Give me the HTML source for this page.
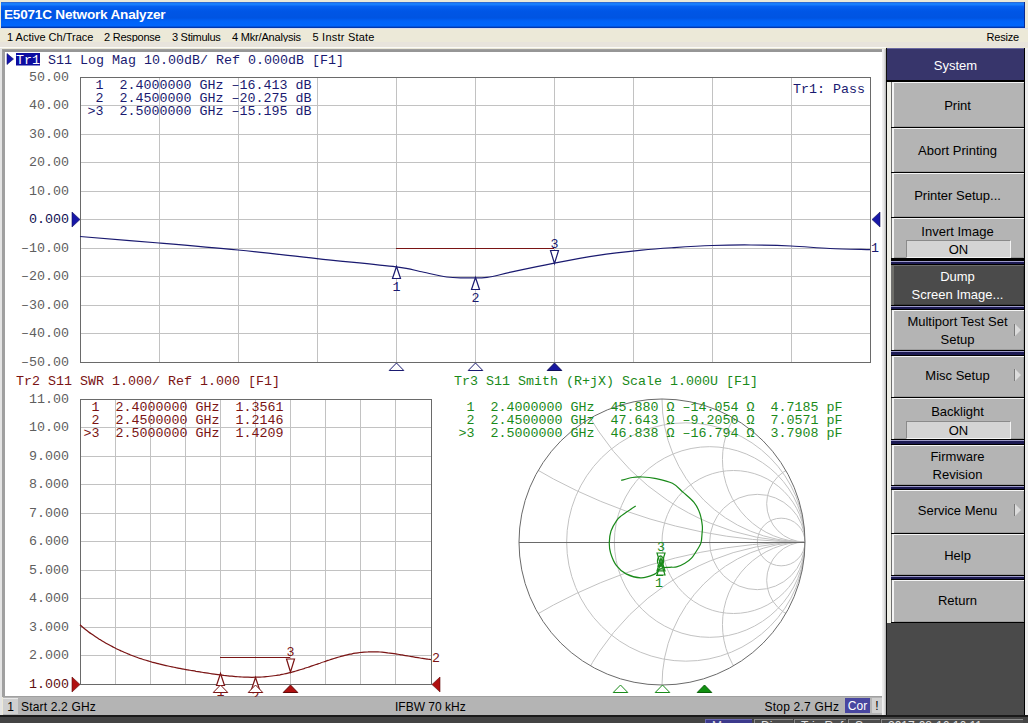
<!DOCTYPE html>
<html><head><meta charset="utf-8"><style>
html,body{margin:0;padding:0;}
body{width:1028px;height:723px;overflow:hidden;position:relative;background:#ece9d8;font-family:"Liberation Sans", sans-serif;}
.a{position:absolute;}
.title{left:1px;top:2px;width:1024px;height:26px;box-sizing:border-box;border-right:1px solid #0a2a90;background:linear-gradient(#2c6cd6 0px,#2c6cd6 1px,#1a7efc 1px,#1a7efc 3px,#0862f2 4px,#0056e6 9px,#0054e2 16px,#0062f8 19px,#0066fc 24px,#0040c0 25px,#0030a0 26px);}
.title span{position:absolute;left:3px;top:5px;color:#fff;font-weight:bold;font-size:13.6px;letter-spacing:-0.22px;line-height:16px;}
.menu{left:0;top:28px;width:1028px;height:19px;font-size:11px;line-height:18px;color:#000;}
.menu span{position:absolute;top:0;white-space:pre;}
.panel{left:5px;top:52px;width:877px;height:644px;background:#fff;}
.sk{font-size:13px;text-align:center;white-space:pre;}

.onbox{background:#d4d4d4;border-top:1px solid #8a8a8a;border-left:1px solid #8a8a8a;border-bottom:1px solid #f4f4f4;border-right:1px solid #f4f4f4;text-align:center;line-height:18px;color:#000;box-sizing:border-box;font-size:13px;}
.arr{width:0;height:0;border-left:6px solid #dcdcdc;border-top:6px solid transparent;border-bottom:6px solid transparent;}
.status{left:3px;top:697px;width:879px;height:18px;background:#b4b4b4;font-size:12px;line-height:18px;color:#000;}
.status span{position:absolute;top:0;white-space:pre;}
.tb{top:719px;height:4px;overflow:hidden;background:#4c4c4c;border-top:1px solid #8c8c8c;border-left:1px solid #8c8c8c;box-sizing:border-box;color:#e0e0e0;font-size:12px;line-height:13px;text-indent:6px;white-space:pre;}
</style></head><body>
<div class="a title"><span>E5071C Network Analyzer</span></div>
<div class="a menu"><span style="left:7px">1 Active Ch/Trace</span><span style="left:104px;letter-spacing:-0.22px">2 Response</span><span style="left:172px;letter-spacing:-0.29px">3 Stimulus</span><span style="left:232px;letter-spacing:-0.19px">4 Mkr/Analysis</span><span style="left:312.5px;letter-spacing:0.22px">5 Instr State</span><span style="left:986.5px;letter-spacing:-0.2px">Resize</span></div>
<div class="a" style="left:0;top:28px;width:1028px;height:1px;background:#d8dcec"></div>
<div class="a" style="left:0;top:42px;width:1028px;height:5px;background:#e8e4dc"></div>
<div class="a" style="left:0;top:47px;width:886px;height:1px;background:#fbfbf8"></div>
<div class="a" style="left:2px;top:49px;width:884px;height:648px;background:#a0a0a0"></div>
<div class="a" style="left:3px;top:50px;width:879px;height:2px;background:#969696"></div>
<div class="a" style="left:882px;top:49px;width:4px;height:667px;background:linear-gradient(90deg,#f2f2f2,#e6e6e6 50%,#b0b0b0)"></div>
<div class="a" style="left:886px;top:48px;width:1px;height:669px;background:#101010"></div>
<div class="a" style="left:887px;top:81px;width:4px;height:542px;background:#f0f0e8"></div>
<div class="a panel"></div>
<svg class="a" style="left:0;top:0" width="1028" height="723" font-family='"Liberation Mono", monospace'><line x1="159.5" y1="77" x2="159.5" y2="362" stroke="#c2c2c2" stroke-width="1"/><line x1="238.5" y1="77" x2="238.5" y2="362" stroke="#c2c2c2" stroke-width="1"/><line x1="317.5" y1="77" x2="317.5" y2="362" stroke="#c2c2c2" stroke-width="1"/><line x1="396.5" y1="77" x2="396.5" y2="362" stroke="#c2c2c2" stroke-width="1"/><line x1="475.5" y1="77" x2="475.5" y2="362" stroke="#c2c2c2" stroke-width="1"/><line x1="554.5" y1="77" x2="554.5" y2="362" stroke="#c2c2c2" stroke-width="1"/><line x1="633.5" y1="77" x2="633.5" y2="362" stroke="#c2c2c2" stroke-width="1"/><line x1="712.5" y1="77" x2="712.5" y2="362" stroke="#c2c2c2" stroke-width="1"/><line x1="791.5" y1="77" x2="791.5" y2="362" stroke="#c2c2c2" stroke-width="1"/><line x1="80" y1="105.5" x2="870" y2="105.5" stroke="#c2c2c2" stroke-width="1"/><line x1="80" y1="134.5" x2="870" y2="134.5" stroke="#c2c2c2" stroke-width="1"/><line x1="80" y1="162.5" x2="870" y2="162.5" stroke="#c2c2c2" stroke-width="1"/><line x1="80" y1="191.5" x2="870" y2="191.5" stroke="#c2c2c2" stroke-width="1"/><line x1="80" y1="219.5" x2="870" y2="219.5" stroke="#c2c2c2" stroke-width="1"/><line x1="80" y1="248.5" x2="870" y2="248.5" stroke="#c2c2c2" stroke-width="1"/><line x1="80" y1="276.5" x2="870" y2="276.5" stroke="#c2c2c2" stroke-width="1"/><line x1="80" y1="305.5" x2="870" y2="305.5" stroke="#c2c2c2" stroke-width="1"/><line x1="80" y1="333.5" x2="870" y2="333.5" stroke="#c2c2c2" stroke-width="1"/><rect x="80.5" y="77.5" width="790" height="285" fill="none" stroke="#6a6a6a"/><text x="69" y="81" fill="#5e5e5e" text-anchor="end" font-size="13.33" xml:space="preserve">50.00</text><text x="69" y="109" fill="#5e5e5e" text-anchor="end" font-size="13.33" xml:space="preserve">40.00</text><text x="69" y="138" fill="#5e5e5e" text-anchor="end" font-size="13.33" xml:space="preserve">30.00</text><text x="69" y="166" fill="#5e5e5e" text-anchor="end" font-size="13.33" xml:space="preserve">20.00</text><text x="69" y="195" fill="#5e5e5e" text-anchor="end" font-size="13.33" xml:space="preserve">10.00</text><text x="69" y="223" fill="#101050" text-anchor="end" font-size="13.33" xml:space="preserve">0.000</text><text x="69" y="252" fill="#5e5e5e" text-anchor="end" font-size="13.33" xml:space="preserve">–10.00</text><text x="69" y="280" fill="#5e5e5e" text-anchor="end" font-size="13.33" xml:space="preserve">–20.00</text><text x="69" y="309" fill="#5e5e5e" text-anchor="end" font-size="13.33" xml:space="preserve">–30.00</text><text x="69" y="337" fill="#5e5e5e" text-anchor="end" font-size="13.33" xml:space="preserve">–40.00</text><text x="69" y="366" fill="#5e5e5e" text-anchor="end" font-size="13.33" xml:space="preserve">–50.00</text><line x1="396" y1="248.5" x2="554" y2="248.5" stroke="#7a1414" stroke-width="1"/><path d="M80.0,236.5 C93.2,237.6 132.7,240.8 159.0,243.0 C185.3,245.2 211.7,247.4 238.0,250.0 C264.3,252.6 290.7,255.8 317.0,258.6 C343.3,261.4 378.8,264.7 396.0,266.8 C413.2,268.9 411.6,269.8 420.0,271.5 C428.4,273.2 439.0,275.9 446.7,277.0 C454.4,278.1 459.3,277.7 466.0,277.8 C472.7,277.9 479.5,278.3 487.0,277.4 C494.5,276.5 499.6,274.6 510.8,272.2 C522.0,269.8 539.8,266.0 554.3,263.2 C568.8,260.4 583.4,257.6 598.0,255.4 C612.6,253.2 629.1,251.5 641.8,250.2 C654.5,248.9 662.3,248.4 674.0,247.6 C685.7,246.8 699.2,245.9 712.0,245.5 C724.8,245.1 737.8,244.9 751.0,245.0 C764.2,245.1 777.8,245.4 791.0,246.0 C804.2,246.6 816.8,247.9 830.0,248.5 C843.2,249.1 863.3,249.4 870.0,249.6" fill="none" stroke="#1a1a70" stroke-width="1.2"/><polygon points="72,212 80,219.5 72,227" fill="#1818a8" stroke="#10105a" stroke-width="0.6"/><polygon points="880,212 872,219.5 880,227" fill="#1818a8" stroke="#10105a" stroke-width="0.6"/><text x="871" y="252" fill="#1a1a70" text-anchor="start" font-size="13.33" xml:space="preserve">1</text><polygon points="396.5,266.5 392.5,278.5 400.5,278.5" fill="white" stroke="#1a1a70" stroke-width="1.2"/><text x="392.5" y="290.5" fill="#1a1a70" text-anchor="start" font-size="13.33" xml:space="preserve">1</text><polygon points="475.5,277.5 471.5,289.5 479.5,289.5" fill="white" stroke="#1a1a70" stroke-width="1.2"/><text x="471.5" y="301.5" fill="#1a1a70" text-anchor="start" font-size="13.33" xml:space="preserve">2</text><polygon points="554.5,263.5 550.5,250.5 558.5,250.5" fill="white" stroke="#1a1a70" stroke-width="1.2"/><text x="550.5" y="247.5" fill="#1a1a70" text-anchor="start" font-size="13.33" xml:space="preserve">3</text><polygon points="389.2,370.5 396.5,363 403.8,370.5" fill="white" stroke="#1a1a70" stroke-width="1"/><polygon points="468.2,370.5 475.5,363 482.8,370.5" fill="white" stroke="#1a1a70" stroke-width="1"/><polygon points="547.2,370.5 554.5,363 561.8,370.5" fill="#1818a0" stroke="#10105a" stroke-width="1"/><rect x="16" y="53" width="24" height="12.5" fill="#0c0ca0"/><polygon points="7,53.5 13.5,59 7,64.5" fill="#1414b0" stroke="#10106a" stroke-width="0.6"/><text x="16" y="63.5" fill="#ffffff" text-anchor="start" font-size="13.33" xml:space="preserve">Tr1</text><text x="48" y="63.5" fill="#1a1a70" text-anchor="start" font-size="13.33" xml:space="preserve">S11 Log Mag 10.00dB/ Ref 0.000dB [F1]</text><text x="87.5" y="89" fill="#1a1a70" text-anchor="start" font-size="13.33" xml:space="preserve"> 1  2.4000000 GHz –16.413 dB</text><text x="87.5" y="102" fill="#1a1a70" text-anchor="start" font-size="13.33" xml:space="preserve"> 2  2.4500000 GHz –20.275 dB</text><text x="87.5" y="115" fill="#1a1a70" text-anchor="start" font-size="13.33" xml:space="preserve">&gt;3  2.5000000 GHz –15.195 dB</text><text x="865" y="93" fill="#1a1a70" text-anchor="end" font-size="13.33" xml:space="preserve">Tr1: Pass</text><line x1="115.5" y1="399" x2="115.5" y2="684" stroke="#c2c2c2" stroke-width="1"/><line x1="150.5" y1="399" x2="150.5" y2="684" stroke="#c2c2c2" stroke-width="1"/><line x1="185.5" y1="399" x2="185.5" y2="684" stroke="#c2c2c2" stroke-width="1"/><line x1="220.5" y1="399" x2="220.5" y2="684" stroke="#c2c2c2" stroke-width="1"/><line x1="255.5" y1="399" x2="255.5" y2="684" stroke="#c2c2c2" stroke-width="1"/><line x1="290.5" y1="399" x2="290.5" y2="684" stroke="#c2c2c2" stroke-width="1"/><line x1="325.5" y1="399" x2="325.5" y2="684" stroke="#c2c2c2" stroke-width="1"/><line x1="360.5" y1="399" x2="360.5" y2="684" stroke="#c2c2c2" stroke-width="1"/><line x1="395.5" y1="399" x2="395.5" y2="684" stroke="#c2c2c2" stroke-width="1"/><line x1="80" y1="427.5" x2="431" y2="427.5" stroke="#c2c2c2" stroke-width="1"/><line x1="80" y1="456.5" x2="431" y2="456.5" stroke="#c2c2c2" stroke-width="1"/><line x1="80" y1="484.5" x2="431" y2="484.5" stroke="#c2c2c2" stroke-width="1"/><line x1="80" y1="513.5" x2="431" y2="513.5" stroke="#c2c2c2" stroke-width="1"/><line x1="80" y1="541.5" x2="431" y2="541.5" stroke="#c2c2c2" stroke-width="1"/><line x1="80" y1="570.5" x2="431" y2="570.5" stroke="#c2c2c2" stroke-width="1"/><line x1="80" y1="598.5" x2="431" y2="598.5" stroke="#c2c2c2" stroke-width="1"/><line x1="80" y1="627.5" x2="431" y2="627.5" stroke="#c2c2c2" stroke-width="1"/><line x1="80" y1="655.5" x2="431" y2="655.5" stroke="#c2c2c2" stroke-width="1"/><rect x="80.5" y="399.5" width="351" height="285" fill="none" stroke="#6a6a6a"/><text x="69" y="403" fill="#5e5e5e" text-anchor="end" font-size="13.33" xml:space="preserve">11.00</text><text x="69" y="431" fill="#5e5e5e" text-anchor="end" font-size="13.33" xml:space="preserve">10.00</text><text x="69" y="460" fill="#5e5e5e" text-anchor="end" font-size="13.33" xml:space="preserve">9.000</text><text x="69" y="488" fill="#5e5e5e" text-anchor="end" font-size="13.33" xml:space="preserve">8.000</text><text x="69" y="517" fill="#5e5e5e" text-anchor="end" font-size="13.33" xml:space="preserve">7.000</text><text x="69" y="545" fill="#5e5e5e" text-anchor="end" font-size="13.33" xml:space="preserve">6.000</text><text x="69" y="574" fill="#5e5e5e" text-anchor="end" font-size="13.33" xml:space="preserve">5.000</text><text x="69" y="602" fill="#5e5e5e" text-anchor="end" font-size="13.33" xml:space="preserve">4.000</text><text x="69" y="631" fill="#5e5e5e" text-anchor="end" font-size="13.33" xml:space="preserve">3.000</text><text x="69" y="659" fill="#5e5e5e" text-anchor="end" font-size="13.33" xml:space="preserve">2.000</text><text x="69" y="688" fill="#601010" text-anchor="end" font-size="13.33" xml:space="preserve">1.000</text><text x="16" y="385" fill="#7a1414" text-anchor="start" font-size="13.33" xml:space="preserve">Tr2 S11 SWR 1.000/ Ref 1.000 [F1]</text><text x="83.5" y="411" fill="#7a1414" text-anchor="start" font-size="13.33" xml:space="preserve"> 1  2.4000000 GHz  1.3561</text><text x="83.5" y="424" fill="#7a1414" text-anchor="start" font-size="13.33" xml:space="preserve"> 2  2.4500000 GHz  1.2146</text><text x="83.5" y="437" fill="#7a1414" text-anchor="start" font-size="13.33" xml:space="preserve">&gt;3  2.5000000 GHz  1.4209</text><line x1="220" y1="657.5" x2="290" y2="657.5" stroke="#7a1414" stroke-width="1"/><path d="M80.0,624.8 C80.7,625.4 82.7,627.1 84.0,628.3 C85.3,629.4 86.7,630.4 88.0,631.4 C89.3,632.4 90.7,633.4 92.0,634.3 C93.3,635.3 94.7,636.2 96.0,637.1 C97.3,638.0 98.7,638.8 100.0,639.6 C101.3,640.5 102.7,641.3 104.0,642.0 C105.3,642.8 106.7,643.6 108.0,644.3 C109.3,645.0 110.7,645.8 112.0,646.4 C113.3,647.1 114.7,647.8 116.0,648.5 C117.3,649.1 118.7,649.8 120.0,650.4 C121.3,651.0 122.7,651.6 124.0,652.2 C125.3,652.8 126.7,653.3 128.0,653.9 C129.3,654.4 130.7,655.0 132.0,655.5 C133.3,656.0 134.7,656.5 136.0,657.0 C137.3,657.5 138.7,657.9 140.0,658.4 C141.3,658.8 142.7,659.3 144.0,659.7 C145.3,660.1 146.7,660.5 148.0,660.9 C149.3,661.3 150.7,661.7 152.0,662.1 C153.3,662.4 154.7,662.8 156.0,663.1 C157.3,663.5 158.7,663.8 160.0,664.2 C161.3,664.5 162.7,664.8 164.0,665.1 C165.3,665.4 166.7,665.7 168.0,666.0 C169.3,666.3 170.7,666.6 172.0,666.8 C173.3,667.1 174.7,667.4 176.0,667.7 C177.3,667.9 178.7,668.2 180.0,668.4 C181.3,668.7 182.7,668.9 184.0,669.2 C185.3,669.4 186.7,669.7 188.0,669.9 C189.3,670.1 190.7,670.4 192.0,670.6 C193.3,670.8 194.7,671.0 196.0,671.3 C197.3,671.5 198.7,671.7 200.0,671.9 C201.3,672.1 202.7,672.4 204.0,672.6 C205.3,672.8 206.7,673.0 208.0,673.2 C209.3,673.4 210.7,673.6 212.0,673.8 C213.3,674.0 214.7,674.2 216.0,674.3 C217.3,674.5 218.7,674.7 220.0,674.9 C221.3,675.1 222.7,675.2 224.0,675.4 C225.3,675.5 226.7,675.7 228.0,675.8 C229.3,676.0 230.7,676.1 232.0,676.2 C233.3,676.4 234.7,676.5 236.0,676.6 C237.3,676.7 238.7,676.8 240.0,676.9 C241.3,677.0 242.7,677.0 244.0,677.1 C245.3,677.2 246.7,677.2 248.0,677.2 C249.3,677.3 250.7,677.3 252.0,677.3 C253.3,677.3 254.7,677.3 256.0,677.2 C257.3,677.2 258.7,677.2 260.0,677.1 C261.3,677.0 262.7,677.0 264.0,676.9 C265.3,676.8 266.7,676.6 268.0,676.5 C269.3,676.4 270.7,676.2 272.0,676.0 C273.3,675.9 274.7,675.7 276.0,675.5 C277.3,675.3 278.7,675.0 280.0,674.8 C281.3,674.5 282.7,674.3 284.0,674.0 C285.3,673.7 286.7,673.4 288.0,673.1 C289.3,672.8 290.7,672.4 292.0,672.1 C293.3,671.7 294.7,671.4 296.0,671.0 C297.3,670.6 298.7,670.2 300.0,669.8 C301.3,669.4 302.7,669.0 304.0,668.6 C305.3,668.1 306.7,667.7 308.0,667.3 C309.3,666.8 310.7,666.4 312.0,665.9 C313.3,665.5 314.7,665.0 316.0,664.5 C317.3,664.1 318.7,663.6 320.0,663.2 C321.3,662.7 322.7,662.2 324.0,661.8 C325.3,661.3 326.7,660.9 328.0,660.4 C329.3,660.0 330.7,659.5 332.0,659.1 C333.3,658.7 334.7,658.3 336.0,657.9 C337.3,657.5 338.7,657.1 340.0,656.7 C341.3,656.3 342.7,656.0 344.0,655.6 C345.3,655.3 346.7,654.9 348.0,654.6 C349.3,654.3 350.7,654.1 352.0,653.8 C353.3,653.5 354.7,653.3 356.0,653.1 C357.3,652.9 358.7,652.7 360.0,652.5 C361.3,652.4 362.7,652.2 364.0,652.1 C365.3,652.0 366.7,651.9 368.0,651.9 C369.3,651.8 370.7,651.8 372.0,651.8 C373.3,651.8 374.7,651.8 376.0,651.8 C377.3,651.9 378.7,651.9 380.0,652.0 C381.3,652.1 382.7,652.2 384.0,652.3 C385.3,652.5 386.7,652.6 388.0,652.8 C389.3,652.9 390.7,653.1 392.0,653.3 C393.3,653.5 394.7,653.7 396.0,653.9 C397.3,654.1 398.7,654.4 400.0,654.6 C401.3,654.8 402.7,655.1 404.0,655.3 C405.3,655.6 406.7,655.8 408.0,656.0 C409.3,656.3 410.7,656.5 412.0,656.7 C413.3,657.0 414.7,657.2 416.0,657.4 C417.3,657.6 418.7,657.8 420.0,658.0 C421.3,658.3 422.7,658.4 424.0,658.6 C425.3,658.8 426.8,659.0 428.0,659.2 C429.2,659.3 430.5,659.5 431.0,659.6" fill="none" stroke="#7a1414" stroke-width="1.2"/><polygon points="72,677 80,684.5 72,692" fill="#b01010" stroke="#600808" stroke-width="0.6"/><polygon points="440,677 432,684.5 440,692" fill="#b01010" stroke="#600808" stroke-width="0.6"/><text x="432" y="662" fill="#7a1414" text-anchor="start" font-size="13.33" xml:space="preserve">2</text><polygon points="220.5,673.5 216.5,685.5 224.5,685.5" fill="white" stroke="#7a1414" stroke-width="1.2"/><text x="216.5" y="695.5" fill="#7a1414" text-anchor="start" font-size="13.33" xml:space="preserve">1</text><polygon points="255.5,677.5 251.5,689.5 259.5,689.5" fill="white" stroke="#7a1414" stroke-width="1.2"/><text x="251.5" y="699.5" fill="#7a1414" text-anchor="start" font-size="13.33" xml:space="preserve">2</text><polygon points="290.5,672 286.5,659 294.5,659" fill="white" stroke="#7a1414" stroke-width="1.2"/><text x="286.5" y="656" fill="#7a1414" text-anchor="start" font-size="13.33" xml:space="preserve">3</text><polygon points="213.2,692.5 220.5,685 227.8,692.5" fill="white" stroke="#7a1414" stroke-width="1"/><polygon points="248.2,692.5 255.5,685 262.8,692.5" fill="white" stroke="#7a1414" stroke-width="1"/><polygon points="283.2,692.5 290.5,685 297.8,692.5" fill="#b01010" stroke="#600808" stroke-width="1"/><text x="454" y="385" fill="#1a8a1a" text-anchor="start" font-size="13.33" xml:space="preserve">Tr3 S11 Smith (R+jX) Scale 1.000U [F1]</text><clipPath id="sc"><circle cx="662" cy="542" r="143"/></clipPath><g clip-path="url(#sc)"><circle cx="685.83" cy="542" r="119.17" fill="none" stroke="#c2c2c2"/><circle cx="709.67" cy="542" r="95.33" fill="none" stroke="#c2c2c2"/><circle cx="733.50" cy="542" r="71.50" fill="none" stroke="#c2c2c2"/><circle cx="757.33" cy="542" r="47.67" fill="none" stroke="#c2c2c2"/><circle cx="781.17" cy="542" r="23.83" fill="none" stroke="#c2c2c2"/><circle cx="805" cy="8.32" r="533.68" fill="none" stroke="#c2c2c2"/><circle cx="805" cy="1075.68" r="533.68" fill="none" stroke="#c2c2c2"/><circle cx="805" cy="294.32" r="247.68" fill="none" stroke="#c2c2c2"/><circle cx="805" cy="789.68" r="247.68" fill="none" stroke="#c2c2c2"/><circle cx="805" cy="399.00" r="143.00" fill="none" stroke="#c2c2c2"/><circle cx="805" cy="685.00" r="143.00" fill="none" stroke="#c2c2c2"/><circle cx="805" cy="459.44" r="82.56" fill="none" stroke="#c2c2c2"/><circle cx="805" cy="624.56" r="82.56" fill="none" stroke="#c2c2c2"/><circle cx="805" cy="503.68" r="38.32" fill="none" stroke="#c2c2c2"/><circle cx="805" cy="580.32" r="38.32" fill="none" stroke="#c2c2c2"/></g><circle cx="662" cy="542" r="143" fill="none" stroke="#6a6a6a"/><line x1="519" y1="542.5" x2="805" y2="542.5" stroke="#6a6a6a" stroke-width="1"/><text x="458.5" y="411" fill="#1a8a1a" text-anchor="start" font-size="13.33" xml:space="preserve"> 1  2.4000000 GHz  45.880 Ω –14.054 Ω  4.7185 pF</text><text x="458.5" y="424" fill="#1a8a1a" text-anchor="start" font-size="13.33" xml:space="preserve"> 2  2.4500000 GHz  47.643 Ω –9.2050 Ω  7.0571 pF</text><text x="458.5" y="437" fill="#1a8a1a" text-anchor="start" font-size="13.33" xml:space="preserve">&gt;3  2.5000000 GHz  46.838 Ω –16.794 Ω  3.7908 pF</text><path d="M621.2,480.4 C623.1,479.9 628.9,478.1 632.4,477.5 C635.9,476.9 638.6,476.9 642.3,477.0 C646.0,477.1 649.8,477.2 654.8,478.3 C659.8,479.4 667.7,481.0 672.4,483.3 C677.1,485.6 679.6,489.2 683.2,492.4 C686.8,495.6 691.2,498.9 694.0,502.4 C696.8,505.9 698.4,509.3 699.8,513.2 C701.2,517.1 701.9,522.1 702.3,525.6 C702.7,529.1 702.2,531.2 702.0,534.0 C701.8,536.8 701.7,540.0 701.1,542.4 C700.5,544.8 699.8,545.6 698.2,548.2 C696.6,550.8 693.7,555.7 691.5,558.2 C689.3,560.7 687.4,561.8 684.9,563.2 C682.4,564.7 679.1,566.2 676.6,566.9 C674.1,567.6 672.3,567.0 669.7,567.3 C667.1,567.6 663.6,567.3 661.0,568.5 C658.4,569.7 657.6,572.9 654.2,574.4 C650.8,575.9 645.4,577.9 640.7,577.8 C636.0,577.7 630.1,575.9 626.1,573.9 C622.1,571.9 619.1,569.2 616.5,565.7 C613.9,562.2 611.8,556.9 610.6,553.0 C609.4,549.1 609.2,546.1 609.3,542.4 C609.4,538.7 609.8,534.6 611.0,531.0 C612.2,527.4 614.8,523.2 616.6,520.6 C618.4,518.0 619.8,517.1 621.6,515.6 C623.4,514.1 625.0,513.1 627.4,511.5 C629.8,509.9 634.3,507.0 635.7,506.1" fill="none" stroke="#1a8a1a" stroke-width="1.2"/><polygon points="657,553 665,553 661,566" fill="white" stroke="#1a8a1a" stroke-width="1.2"/><polygon points="661,558 657,571 665,571" fill="none" stroke="#1a8a1a" stroke-width="1.2"/><polygon points="661,562 657,575 665,575" fill="none" stroke="#1a8a1a" stroke-width="1.2"/><text x="657" y="551" fill="#1a8a1a" text-anchor="start" font-size="13.33" xml:space="preserve">3</text><ellipse cx="660.5" cy="561" rx="3" ry="5" fill="none" stroke="#1a8a1a" stroke-width="1.3"/><path d="M657,566 L664,566 M657,570 L664,570 M656,575.5 L663,575.5" stroke="#1a8a1a" stroke-width="1.2"/><text x="655" y="587" fill="#1a8a1a" text-anchor="start" font-size="13.33" xml:space="preserve">1</text><polygon points="613.2,692.5 620.5,685 627.8,692.5" fill="white" stroke="#1a8a1a" stroke-width="1"/><polygon points="655.2,692.5 662.5,685 669.8,692.5" fill="white" stroke="#1a8a1a" stroke-width="1"/><polygon points="697.2,692.5 704.5,685 711.8,692.5" fill="#109010" stroke="#0a600a" stroke-width="1"/></svg>
<div class="a" style="left:887px;top:48px;width:137px;height:33px;background:#37356b"></div><div class="a" style="left:887px;top:48px;width:137px;height:1px;background:#6a68a0"></div><div class="a sk" style="left:887px;top:48px;width:137px;height:33px;line-height:36px;color:#fff">System</div><div class="a" style="left:891px;top:82px;width:133px;height:45px;background:#b4b4b4"></div><div class="a" style="left:891px;top:82px;width:1px;height:45px;background:#707070"></div><div class="a" style="left:892px;top:82px;width:2px;height:45px;background:#f4f4f4"></div><div class="a" style="left:892px;top:82px;width:132px;height:1px;background:#f4f4f4"></div><div class="a" style="left:894px;top:126px;width:130px;height:1px;background:#9c9c9c"></div><div class="a" style="left:1023px;top:83px;width:1px;height:44px;background:#9c9c9c"></div><div class="a sk" style="left:891px;top:96.5px;width:133px;line-height:18px;color:#000000">Print</div><div class="a" style="left:891px;top:128px;width:133px;height:44px;background:#b4b4b4"></div><div class="a" style="left:891px;top:128px;width:1px;height:44px;background:#707070"></div><div class="a" style="left:892px;top:128px;width:2px;height:44px;background:#f4f4f4"></div><div class="a" style="left:892px;top:128px;width:132px;height:1px;background:#f4f4f4"></div><div class="a" style="left:894px;top:171px;width:130px;height:1px;background:#9c9c9c"></div><div class="a" style="left:1023px;top:129px;width:1px;height:43px;background:#9c9c9c"></div><div class="a sk" style="left:891px;top:141.5px;width:133px;line-height:18px;color:#000000">Abort Printing</div><div class="a" style="left:891px;top:173px;width:133px;height:44px;background:#b4b4b4"></div><div class="a" style="left:891px;top:173px;width:1px;height:44px;background:#707070"></div><div class="a" style="left:892px;top:173px;width:2px;height:44px;background:#f4f4f4"></div><div class="a" style="left:892px;top:173px;width:132px;height:1px;background:#f4f4f4"></div><div class="a" style="left:894px;top:216px;width:130px;height:1px;background:#9c9c9c"></div><div class="a" style="left:1023px;top:174px;width:1px;height:43px;background:#9c9c9c"></div><div class="a sk" style="left:891px;top:186.5px;width:133px;line-height:18px;color:#000000">Printer Setup...</div><div class="a" style="left:891px;top:218px;width:133px;height:40px;background:#b4b4b4"></div><div class="a" style="left:891px;top:218px;width:1px;height:40px;background:#707070"></div><div class="a" style="left:892px;top:218px;width:2px;height:40px;background:#f4f4f4"></div><div class="a" style="left:892px;top:218px;width:132px;height:1px;background:#f4f4f4"></div><div class="a" style="left:894px;top:257px;width:130px;height:1px;background:#9c9c9c"></div><div class="a" style="left:1023px;top:219px;width:1px;height:39px;background:#9c9c9c"></div><div class="a sk" style="left:891px;top:222.5px;width:133px;line-height:18px;color:#000">Invert Image</div><div class="a onbox" style="left:906px;top:240px;width:105px;height:18px;">ON</div><div class="a" style="left:891px;top:265px;width:133px;height:40px;background:#4b4b4b"></div><div class="a" style="left:891px;top:265px;width:1px;height:40px;background:#707070"></div><div class="a" style="left:892px;top:265px;width:2px;height:40px;background:#6e6e6a"></div><div class="a" style="left:892px;top:265px;width:132px;height:1px;background:#6e6e6a"></div><div class="a" style="left:894px;top:304px;width:130px;height:1px;background:#3a3a3a"></div><div class="a" style="left:1023px;top:266px;width:1px;height:39px;background:#3a3a3a"></div><div class="a sk" style="left:891px;top:267.5px;width:133px;line-height:18px;color:#ffffff">Dump<br>Screen Image...</div><div class="a" style="left:891px;top:310px;width:133px;height:40px;background:#b4b4b4"></div><div class="a" style="left:891px;top:310px;width:1px;height:40px;background:#707070"></div><div class="a" style="left:892px;top:310px;width:2px;height:40px;background:#f4f4f4"></div><div class="a" style="left:892px;top:310px;width:132px;height:1px;background:#f4f4f4"></div><div class="a" style="left:894px;top:349px;width:130px;height:1px;background:#9c9c9c"></div><div class="a" style="left:1023px;top:311px;width:1px;height:39px;background:#9c9c9c"></div><div class="a sk" style="left:891px;top:312.5px;width:133px;line-height:18px;color:#000000">Multiport Test Set<br>Setup</div><div class="a" style="left:1014px;top:324px;width:1px;height:12px;background:#7a7a7a"></div><div class="a arr" style="left:1015px;top:324px"></div><div class="a" style="left:891px;top:356px;width:133px;height:41px;background:#b4b4b4"></div><div class="a" style="left:891px;top:356px;width:1px;height:41px;background:#707070"></div><div class="a" style="left:892px;top:356px;width:2px;height:41px;background:#f4f4f4"></div><div class="a" style="left:892px;top:356px;width:132px;height:1px;background:#f4f4f4"></div><div class="a" style="left:894px;top:396px;width:130px;height:1px;background:#9c9c9c"></div><div class="a" style="left:1023px;top:357px;width:1px;height:40px;background:#9c9c9c"></div><div class="a sk" style="left:891px;top:366.5px;width:133px;line-height:18px;color:#000000">Misc Setup</div><div class="a" style="left:1014px;top:369px;width:1px;height:12px;background:#7a7a7a"></div><div class="a arr" style="left:1015px;top:369px"></div><div class="a" style="left:891px;top:398px;width:133px;height:41px;background:#b4b4b4"></div><div class="a" style="left:891px;top:398px;width:1px;height:41px;background:#707070"></div><div class="a" style="left:892px;top:398px;width:2px;height:41px;background:#f4f4f4"></div><div class="a" style="left:892px;top:398px;width:132px;height:1px;background:#f4f4f4"></div><div class="a" style="left:894px;top:438px;width:130px;height:1px;background:#9c9c9c"></div><div class="a" style="left:1023px;top:399px;width:1px;height:40px;background:#9c9c9c"></div><div class="a sk" style="left:891px;top:402.5px;width:133px;line-height:18px;color:#000">Backlight</div><div class="a onbox" style="left:906px;top:421px;width:105px;height:18px;">ON</div><div class="a" style="left:891px;top:445px;width:133px;height:40px;background:#b4b4b4"></div><div class="a" style="left:891px;top:445px;width:1px;height:40px;background:#707070"></div><div class="a" style="left:892px;top:445px;width:2px;height:40px;background:#f4f4f4"></div><div class="a" style="left:892px;top:445px;width:132px;height:1px;background:#f4f4f4"></div><div class="a" style="left:894px;top:484px;width:130px;height:1px;background:#9c9c9c"></div><div class="a" style="left:1023px;top:446px;width:1px;height:39px;background:#9c9c9c"></div><div class="a sk" style="left:891px;top:447.5px;width:133px;line-height:18px;color:#000000">Firmware<br>Revision</div><div class="a" style="left:891px;top:490px;width:133px;height:43px;background:#b4b4b4"></div><div class="a" style="left:891px;top:490px;width:1px;height:43px;background:#707070"></div><div class="a" style="left:892px;top:490px;width:2px;height:43px;background:#f4f4f4"></div><div class="a" style="left:892px;top:490px;width:132px;height:1px;background:#f4f4f4"></div><div class="a" style="left:894px;top:532px;width:130px;height:1px;background:#9c9c9c"></div><div class="a" style="left:1023px;top:491px;width:1px;height:42px;background:#9c9c9c"></div><div class="a sk" style="left:891px;top:501.5px;width:133px;line-height:18px;color:#000000">Service Menu</div><div class="a" style="left:1014px;top:504px;width:1px;height:12px;background:#7a7a7a"></div><div class="a arr" style="left:1015px;top:504px"></div><div class="a" style="left:891px;top:534px;width:133px;height:41px;background:#b4b4b4"></div><div class="a" style="left:891px;top:534px;width:1px;height:41px;background:#707070"></div><div class="a" style="left:892px;top:534px;width:2px;height:41px;background:#f4f4f4"></div><div class="a" style="left:892px;top:534px;width:132px;height:1px;background:#f4f4f4"></div><div class="a" style="left:894px;top:574px;width:130px;height:1px;background:#9c9c9c"></div><div class="a" style="left:1023px;top:535px;width:1px;height:40px;background:#9c9c9c"></div><div class="a sk" style="left:891px;top:546.5px;width:133px;line-height:18px;color:#000000">Help</div><div class="a" style="left:891px;top:580px;width:133px;height:42px;background:#b4b4b4"></div><div class="a" style="left:891px;top:580px;width:1px;height:42px;background:#707070"></div><div class="a" style="left:892px;top:580px;width:2px;height:42px;background:#f4f4f4"></div><div class="a" style="left:892px;top:580px;width:132px;height:1px;background:#f4f4f4"></div><div class="a" style="left:894px;top:621px;width:130px;height:1px;background:#9c9c9c"></div><div class="a" style="left:1023px;top:581px;width:1px;height:41px;background:#9c9c9c"></div><div class="a sk" style="left:891px;top:591.5px;width:133px;line-height:18px;color:#000000">Return</div><div class="a" style="left:886px;top:80px;width:138px;height:2px;background:#000"></div><div class="a" style="left:891px;top:127px;width:133px;height:1px;background:#000"></div><div class="a" style="left:891px;top:172px;width:133px;height:1px;background:#000"></div><div class="a" style="left:891px;top:217px;width:133px;height:1px;background:#000"></div><div class="a" style="left:891px;top:397px;width:133px;height:1px;background:#000"></div><div class="a" style="left:891px;top:533px;width:133px;height:1px;background:#000"></div><div class="a" style="left:891px;top:622px;width:133px;height:1px;background:#000"></div><div class="a" style="left:891px;top:258px;width:133px;height:7px;background:#000"></div><div class="a" style="left:891px;top:261px;width:133px;height:1px;background:#9c9ac8"></div><div class="a" style="left:891px;top:262px;width:133px;height:2px;background:#1c1a52"></div><div class="a" style="left:891px;top:305px;width:133px;height:5px;background:#000"></div><div class="a" style="left:891px;top:306px;width:133px;height:1px;background:#9c9ac8"></div><div class="a" style="left:891px;top:307px;width:133px;height:2px;background:#1c1a52"></div><div class="a" style="left:891px;top:350px;width:133px;height:6px;background:#000"></div><div class="a" style="left:891px;top:351px;width:133px;height:1px;background:#9c9ac8"></div><div class="a" style="left:891px;top:352px;width:133px;height:3px;background:#1c1a52"></div><div class="a" style="left:891px;top:439px;width:133px;height:6px;background:#000"></div><div class="a" style="left:891px;top:440px;width:133px;height:1px;background:#9c9ac8"></div><div class="a" style="left:891px;top:441px;width:133px;height:3px;background:#1c1a52"></div><div class="a" style="left:891px;top:485px;width:133px;height:5px;background:#000"></div><div class="a" style="left:891px;top:486px;width:133px;height:1px;background:#9c9ac8"></div><div class="a" style="left:891px;top:487px;width:133px;height:2px;background:#1c1a52"></div><div class="a" style="left:891px;top:575px;width:133px;height:5px;background:#000"></div><div class="a" style="left:891px;top:576px;width:133px;height:1px;background:#9c9ac8"></div><div class="a" style="left:891px;top:577px;width:133px;height:2px;background:#1c1a52"></div>
<div class="a" style="left:887px;top:623px;width:137px;height:93px;background:#4a4a4a"></div>
<div class="a" style="left:1024px;top:48px;width:1px;height:669px;background:#000"></div>
<div class="a" style="left:1025px;top:48px;width:3px;height:669px;background:#eeeeee"></div>
<div class="a" style="left:0;top:48px;width:2px;height:669px;background:#e4e4e4"></div>
<div class="a status"><span class="a" style="left:0px;top:1px;width:15px;height:16px;background:#cfcfcf;border-top:1px solid #e8e8e8;box-sizing:border-box;line-height:17px;text-align:center">1</span><span style="left:18px;top:1px;letter-spacing:0.17px">Start 2.2 GHz</span><span style="left:392px;top:1px">IFBW 70 kHz</span><span style="left:761.5px;top:1px;letter-spacing:0.22px">Stop 2.7 GHz</span><span class="a" style="left:842px;top:1px;width:25px;height:15px;background:#4846a0;color:#fff;line-height:16px;text-align:center">Cor</span><span class="a" style="left:869px;top:1px;width:10px;height:15px;background:#d0d0d0;line-height:16px;text-align:center">!</span></div>
<div class="a" style="left:0;top:715px;width:1028px;height:2px;background:#1a1a1a"></div>
<div class="a" style="left:0;top:717px;width:1028px;height:6px;background:#444"></div>
<div class="a tb" style="left:705px;width:47px;background:#3c3a8c;border-color:#6a68b0">Meas</div>
<div class="a tb" style="left:754px;width:39px;">Disp</div>
<div class="a tb" style="left:794px;width:52px;">Trig Ref</div>
<div class="a tb" style="left:848px;width:32px;">Svc</div>
<div class="a tb" style="left:881px;width:142px;">2017-08-16 16:11</div>
</body></html>
